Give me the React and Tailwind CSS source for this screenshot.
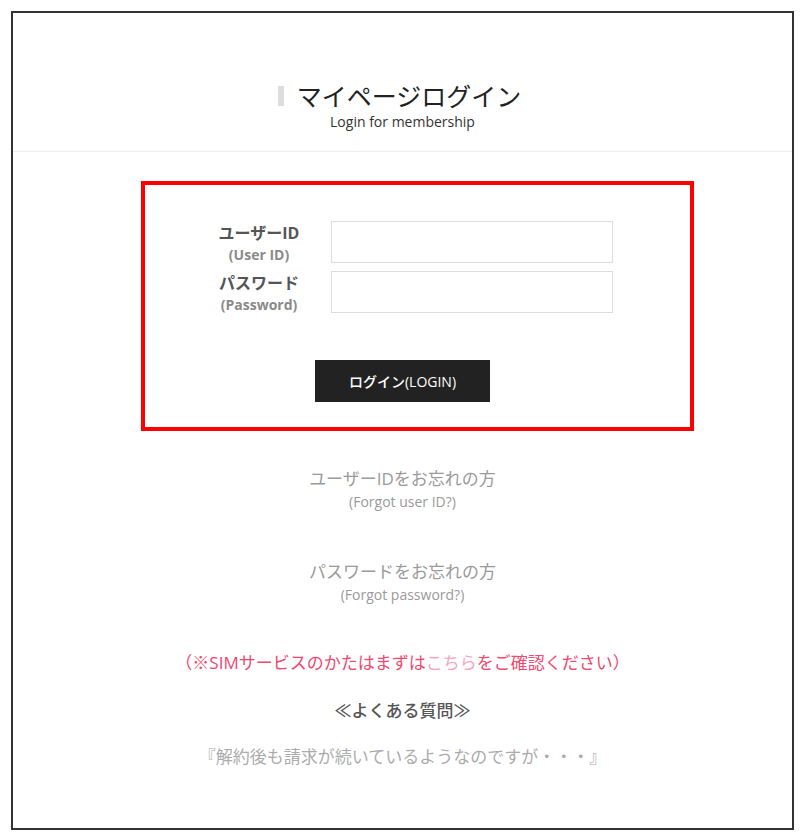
import React from 'react';

const font = { fontFamily: "'Open Sans', 'Noto Sans CJK JP', sans-serif" };

const FieldRow = ({ label, sub, type }) => (
  <div className="flex items-start h-[42px]">
    <div className="w-[120px] mt-[1px] text-center">
      <div className="text-[16px] leading-[22px] font-bold text-[#555]">{label}</div>
      <div className="text-[14px] leading-[22px] font-bold text-[#8a8a8a]">{sub}</div>
    </div>
    <input type={type} className="ml-[12px] w-[282px] h-[42px] border border-[#dddddd] bg-white outline-none" />
  </div>
);

const App = () => {
  return (
    <div className="min-h-[837px] bg-white pt-[11px]" style={font}>
      <div className="ml-[11px] w-[783px] h-[819px] border-2 border-[#333]">
        <div className="pt-[67px] text-center">
          <h1 className="flex items-center justify-center text-[25px] leading-[32px] font-normal text-[#222]">
            <span className="w-[6px] h-[20px] bg-[#dddddd] mr-[13px] -ml-[6px]"></span>
            マイページログイン
          </h1>
          <p className="text-[14px] leading-[20px] text-[#333]">Login for membership</p>
        </div>
        <div className="mt-[19px] border-t border-[#eeeeee]"></div>

        <div className="mt-[29px] ml-[128px] w-[553px] h-[250px] border-4 border-[#ff0000]">
          <div className="pt-[36px] pl-[54px] flex flex-col gap-[8px]">
            <FieldRow label="ユーザーID" sub="(User ID)" type="text" />
            <FieldRow label="パスワード" sub="(Password)" type="password" />
          </div>
          <button className="mt-[47px] ml-[170px] w-[175px] h-[42px] bg-[#222] text-white text-[14px] font-medium">
            ログイン(LOGIN)
          </button>
        </div>

        <div className="text-center">
          <div className="mt-[36px] text-[17px] leading-[24px] text-[#9a9a9a]">ユーザーIDをお忘れの方</div>
          <div className="text-[14px] leading-[22px] text-[#9a9a9a]">(Forgot user ID?)</div>

          <div className="mt-[47px] text-[17px] leading-[24px] text-[#9a9a9a]">パスワードをお忘れの方</div>
          <div className="text-[14px] leading-[22px] text-[#9a9a9a]">(Forgot password?)</div>

          <div className="mt-[45px] text-[17px] leading-[24px] text-[#f0486e]">
            （※SIMサービスのかたはまずは<span className="text-[#f7a6ba]">こちら</span>をご確認ください）
          </div>
          <div className="mt-[24px] text-[17px] leading-[24px] font-medium text-[#555]">≪よくある質問≫</div>
          <div className="mt-[22px] text-[17px] leading-[24px] text-[#ababab]">『解約後も請求が続いているようなのですが・・・』</div>
        </div>
      </div>
    </div>
  );
};

export default App;
